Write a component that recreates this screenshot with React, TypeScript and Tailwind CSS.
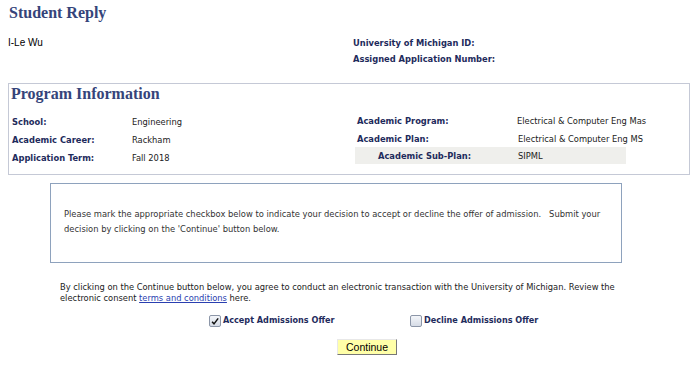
import React from "react";

const label = "font-bold text-[#1e2b5c] shrink-0";
const serif = { fontFamily: '"Liberation Serif", Georgia, serif' };

function Box({ checked }: { checked?: boolean }) {
  return (
    <span className="inline-flex items-center justify-center w-[12px] h-[12px] border border-[#8c96a8] rounded-[2px] bg-gradient-to-b from-[#f4f6fa] to-[#d6dce6]">
      {checked && (
        <svg viewBox="0 0 12 12" className="w-[11px] h-[11px]">
          <path d="M2.5 6.2 L4.8 8.8 L9.8 2.2" fill="none" stroke="#111" strokeWidth="1.8" />
        </svg>
      )}
    </span>
  );
}

export default function App() {
  return (
    <div
      className="w-[700px] h-[367px] bg-white overflow-hidden text-[#222]"
      style={{ fontFamily: '"DejaVu Sans Condensed", "DejaVu Sans", Verdana, sans-serif' }}
    >
      <h1 className="pl-[9px] pt-[3px] h-[22px] text-[16px] leading-[20px] font-bold text-[#35447a]" style={serif}>
        Student Reply
      </h1>

      <div className="flex mt-[13px] text-[9.25px] leading-[16px]">
        <div className="w-[353px] pl-[8px]" style={{ fontFamily: '"Liberation Sans", Arial, sans-serif' }}>
          <span className="text-[10px] text-black">I-Le Wu</span>
        </div>
        <div className={label}>
          <p>University of Michigan ID:</p>
          <p>Assigned Application Number:</p>
        </div>
      </div>

      <div className="ml-[8px] mt-[16px] w-[682px] h-[92px] border border-[#c5c9d6]">
        <h2 className="pl-[2px] h-[29px] text-[16px] leading-[20px] font-bold text-[#35447a]" style={serif}>
          Program Information
        </h2>
        <div className="flex text-[9.25px]">
          <div className="w-[346px] pl-[3px]">
            <div className="flex h-[18px] items-center">
              <span className={`w-[120px] ${label}`}>School:</span>
              <span>Engineering</span>
            </div>
            <div className="flex h-[17px] items-center">
              <span className={`w-[120px] ${label}`}>Academic Career:</span>
              <span>Rackham</span>
            </div>
            <div className="flex h-[19px] items-center">
              <span className={`w-[120px] ${label}`}>Application Term:</span>
              <span>Fall 2018</span>
            </div>
          </div>
          <div className="-mt-[1px] w-[271px]">
            <div className="flex h-[18px] items-center pl-[2px]">
              <span className={`w-[160px] ${label}`}>Academic Program:</span>
              <span className="whitespace-nowrap">Electrical &amp; Computer Eng Mas</span>
            </div>
            <div className="flex h-[17px] items-center pl-[2px]">
              <span className={`w-[161px] ${label}`}>Academic Plan:</span>
              <span className="whitespace-nowrap">Electrical &amp; Computer Eng MS</span>
            </div>
            <div className="flex h-[17px] items-center bg-[#efefec] pl-[23px]">
              <span className={`w-[140px] ${label}`}>Academic Sub-Plan:</span>
              <span>SIPML</span>
            </div>
          </div>
        </div>
      </div>

      <div className="ml-[50px] mt-[8px] w-[572px] h-[80px] border border-[#8ea2bd] pl-[13px] pt-[22px] text-[9.3px] leading-[15px] text-[#333]">
        <p>
          Please mark the appropriate checkbox below to indicate your decision to accept or decline the offer of admission.&nbsp;&nbsp;&nbsp;Submit your
          <br />
          decision by clicking on the 'Continue' button below.
        </p>
      </div>

      <p className="ml-[60px] mt-[18px] w-[570px] text-[9.25px] leading-[11px] text-[#222]">
        By clicking on the Continue button below, you agree to conduct an electronic transaction with the University of Michigan. Review the
        <br />
        electronic consent <span className="text-[#2a3fb0] underline">terms and conditions</span> here.
      </p>

      <div className="flex items-center mt-[10px] h-[16px] text-[9px]">
        <div className="flex items-center gap-[2px] ml-[209px] w-[201px]">
          <Box checked />
          <span className={label}>Accept Admissions Offer</span>
        </div>
        <div className="flex items-center gap-[2px]">
          <Box />
          <span className={label}>Decline Admissions Offer</span>
        </div>
      </div>

      <div className="mt-[5px] ml-[337px]">
        <button
          className="w-[60px] h-[16px] bg-[#ffffa8] border border-t-[#e8e8e8] border-l-[#e8e8e8] border-r-[#777] border-b-[#777] text-[10.5px] leading-[14px] text-black"
          style={{ fontFamily: '"Liberation Sans", Arial, sans-serif' }}
        >
          Continue
        </button>
      </div>
    </div>
  );
}
